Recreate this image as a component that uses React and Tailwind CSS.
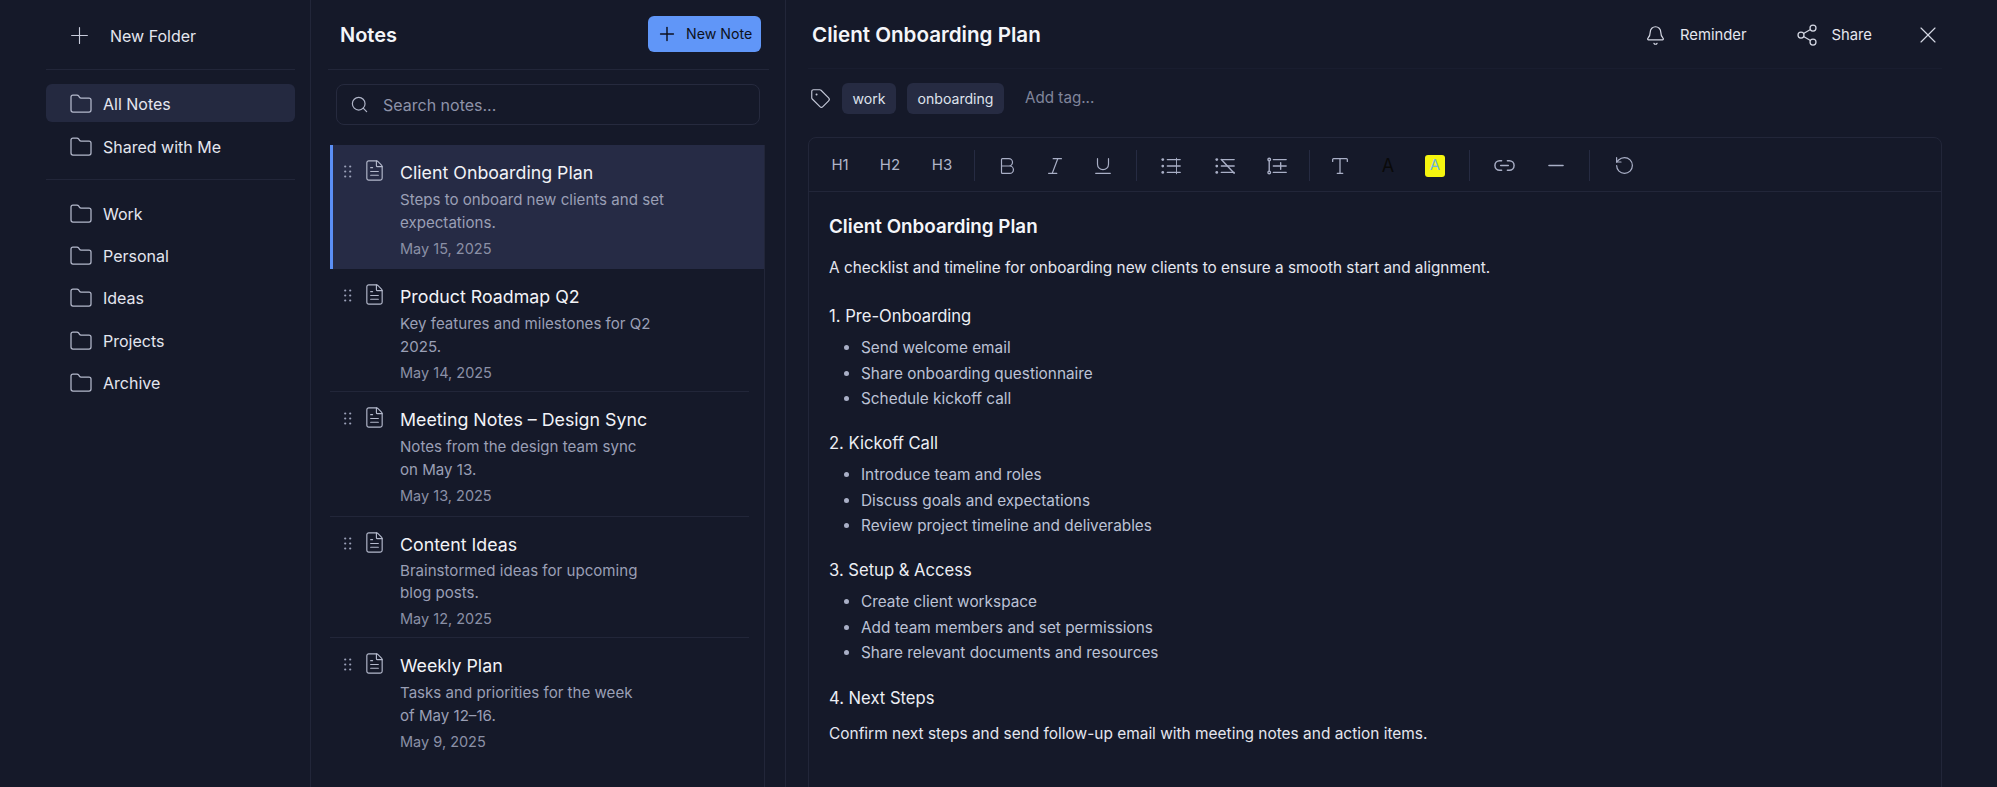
import React from "react";
import {
  Bell,
  Bold,
  FileText,
  Folder,
  Italic,
  Link2,
  Minus,
  Plus,
  RotateCcw,
  Search,
  Share2,
  Tag,
  Type,
  Underline,
  X,
} from "lucide-react";

const topFolders = ["All Notes", "Shared with Me"];
const folders = ["Work", "Personal", "Ideas", "Projects", "Archive"];

const notes = [
  { title: "Client Onboarding Plan", lines: ["Steps to onboard new clients and set", "expectations."], date: "May 15, 2025", active: true, h: "h-[124px]", lh: "leading-[23px]" },
  { title: "Product Roadmap Q2", lines: ["Key features and milestones for Q2", "2025."], date: "May 14, 2025", h: "h-[123px]", lh: "leading-[23px]" },
  { title: "Meeting Notes – Design Sync", lines: ["Notes from the design team sync", "on May 13."], date: "May 13, 2025", h: "h-[125px]", lh: "leading-[23px]" },
  { title: "Content Ideas", lines: ["Brainstormed ideas for upcoming", "blog posts."], date: "May 12, 2025", h: "h-[121px]", lh: "leading-[22px]" },
  { title: "Weekly Plan", lines: ["Tasks and priorities for the week", "of May 12–16."], date: "May 9, 2025", h: "h-[122px]", lh: "leading-[23px]" },
];

const sections = [
  { title: "1. Pre-Onboarding", items: ["Send welcome email", "Share onboarding questionnaire", "Schedule kickoff call"] },
  { title: "2. Kickoff Call", items: ["Introduce team and roles", "Discuss goals and expectations", "Review project timeline and deliverables"] },
  { title: "3. Setup & Access", items: ["Create client workspace", "Add team members and set permissions", "Share relevant documents and resources"] },
];

const Grip = () => (
  <svg width="8" height="13" viewBox="0 0 8 13" className="shrink-0 text-[#9aa0b8]" fill="currentColor">
    <circle cx="1.2" cy="1.5" r="1.1" />
    <circle cx="6.2" cy="1.5" r="1.1" />
    <circle cx="1.2" cy="6.5" r="1.1" />
    <circle cx="6.2" cy="6.5" r="1.1" />
    <circle cx="1.2" cy="11.5" r="1.1" />
    <circle cx="6.2" cy="11.5" r="1.1" />
  </svg>
);

// the three list buttons are not in lucide in this form
const ListIcon = ({ variant }) => (
  <svg width="22" height="22" viewBox="0 0 24 24" fill="none" stroke="currentColor" strokeWidth="1.5" strokeLinecap="round">
    {variant === "tree" ? (
      <>
        <circle cx="3.5" cy="5" r="1.4" />
        <path d="M3.5 6.5v11" />
        <circle cx="3.5" cy="19" r="1.4" />
      </>
    ) : (
      <>
        <circle cx="3" cy="5" r="1.5" fill="currentColor" stroke="none" />
        <circle cx="3" cy="12" r="1.5" fill="currentColor" stroke="none" />
        <circle cx="3" cy="19" r="1.5" fill="currentColor" stroke="none" />
      </>
    )}
    <path d="M8 5h14M8 12h14M8 19h14" />
    {variant === "plain" && <path d="M18 3.5v17" strokeWidth="1" />}
    {variant === "slash" && <path d="M8 5l14 15" />}
    {variant === "tree" && <path d="M16 8.5v7" />}
  </svg>
);

const FolderRow = ({ name, active }) => (
  <div className={`flex h-[38px] items-center rounded-md pl-[23px] pt-[2px] text-[16px] text-[#e4e6ef] ${active ? "bg-[#242940]" : ""}`}>
    <Folder size={24} strokeWidth={1.25} className="shrink-0 text-[#b4b9cc]" />
    <span className="ml-[10px]">{name}</span>
  </div>
);

const Divider = ({ className }) => <div className={`h-[31px] w-px bg-[#262b42] ${className}`} />;

const ToolBtn = ({ className = "", children }) => (
  <span className={`flex w-[24px] justify-center text-[#a9afc6] ${className}`}>{children}</span>
);

const App = () => {
  return (
    <div className="flex h-[787px] w-full overflow-hidden bg-[#151929] font-['Inter',sans-serif]">
      {/* folders */}
      <aside className="w-[311px] shrink-0 border-r border-[#222639] pl-[46px] pr-[15px]">
        <div className="flex h-[69px] items-center pl-[20px] pt-[2px] text-[16px] text-[#e4e6ef]">
          <Plus size={27} strokeWidth={1} className="text-[#c8ccdb]" />
          <span className="ml-[17px]">New Folder</span>
        </div>
        <div className="h-px bg-[#222639]" />
        <div className="mt-[14px] flex flex-col gap-[5px]">
          {topFolders.map((name, idx) => (
            <FolderRow key={name} name={name} active={idx === 0} />
          ))}
        </div>
        <div className="mt-[14px] h-px bg-[#222639]" />
        <div className="mt-[14px] flex flex-col gap-[4.2px]">
          {folders.map((name) => (
            <FolderRow key={name} name={name} />
          ))}
        </div>
      </aside>

      {/* note list */}
      <section className="w-[475px] shrink-0 border-r border-[#222639] pr-[20px]">
        <div className="ml-[17px] mr-[-4px] box-content flex h-[69px] items-center justify-between border-b border-[#222639] pl-[12px] pr-[8px]">
          <h2 className="pt-[1px] text-[20px] font-semibold text-[#f4f5f9]">Notes</h2>
          <button className="mt-[-2px] flex h-[36px] w-[113px] items-center rounded-md bg-[#6096f8] pl-[8px] text-[14.2px] text-[#0d1120]">
            <Plus size={22} strokeWidth={1.6} />
            <span className="ml-[8px]">New Note</span>
          </button>
        </div>
        <div className="ml-[25px] mr-[5px] mt-[14px] flex h-[41px] items-center rounded-lg border border-[#262a3e] pl-[13px] text-[16px] text-[#8d92a8]">
          <Search size={19} strokeWidth={1.5} className="text-[#b0b5c8]" />
          <span className="ml-[14px]">Search notes...</span>
        </div>
        <div className="ml-[19px] mt-[20px] h-[700px] border-r border-[#222639]">
          {notes.map((note, idx) => (
            <div
              key={note.title}
              className={`relative flex ${note.h} pt-[16px] ${note.active ? "border-l-[3px] border-[#5b8ff5] bg-[#262b45] pl-[11px]" : "pl-[14px]"}`}
            >
              <div className="mt-[4px]">
                <Grip />
              </div>
              <FileText size={23} strokeWidth={1.2} className="ml-[11px] mt-[-2px] shrink-0 text-[#b4b9cc]" />
              <div className="ml-[14px]">
                <h3 className="text-[17.8px] leading-[24px] text-[#f2f3f7]">{note.title}</h3>
                <p className={`mt-[3px] text-[15.1px] text-[#9a9fb5] ${note.lh}`}>
                  {note.lines[0]}
                  <br />
                  {note.lines[1]}
                </p>
                <p className="mt-[4px] text-[14.5px] leading-[22px] text-[#8b90a6]">{note.date}</p>
              </div>
              {idx > 0 && idx < notes.length - 1 && (
                <div className="absolute bottom-0 left-0 right-[15px] h-px bg-[#222639]" />
              )}
            </div>
          ))}
        </div>
      </section>

      {/* editor */}
      <main className="min-w-0 flex-1 pl-[22px] pr-[55px]">
        <div className="flex h-[69px] items-center justify-between border-b border-[#191d2f] pt-[2px]">
          <h1 className="ml-[4px] text-[20.6px] font-semibold text-[#f4f5f9]">Client Onboarding Plan</h1>
          <div className="flex items-center text-[14.8px] text-[#e4e6ef]">
            <Bell size={21} strokeWidth={1.4} className="text-[#d4d7e3]" />
            <span className="ml-[14px]">Reminder</span>
            <Share2 size={24} strokeWidth={1.25} className="ml-[49px] text-[#d4d7e3]" />
            <span className="ml-[12px]">Share</span>
            <X size={28} strokeWidth={1} className="ml-[42px] text-[#d4d7e3]" />
          </div>
        </div>
        <div className="mt-[14px] flex h-[31px] items-center">
          <Tag size={21} strokeWidth={1.3} className="ml-[2px] text-[#c4c8d8]" />
          <span className="ml-[11px] flex h-[31px] items-center rounded-md bg-[#262b42] px-[10.5px] text-[14.1px] text-[#dfe2ec]">work</span>
          <span className="ml-[11px] flex h-[31px] items-center rounded-md bg-[#262b42] px-[10.5px] text-[14.1px] text-[#dfe2ec]">onboarding</span>
          <span className="ml-[21px] text-[15.2px] text-[#80859b]">Add tag...</span>
        </div>
        <div className="mt-[23px] h-[700px] rounded-lg border border-[#222639]">
          <div className="flex h-[54px] items-center border-b border-[#222639] pl-[18px] pt-[2px] text-[15px] text-[#b0b5c9]">
            <span className="w-[26px] text-center">H1</span>
            <span className="ml-[24px] w-[26px] text-center">H2</span>
            <span className="ml-[26px] w-[26px] text-center">H3</span>
            <Divider className="ml-[19px]" />
            <ToolBtn className="ml-[20px]"><Bold size={22} strokeWidth={1.3} /></ToolBtn>
            <ToolBtn className="ml-[24px]"><Italic size={22} strokeWidth={1.3} /></ToolBtn>
            <ToolBtn className="ml-[24px]"><Underline size={22} strokeWidth={1.3} /></ToolBtn>
            <Divider className="ml-[21px]" />
            <ToolBtn className="ml-[22px]"><ListIcon variant="plain" /></ToolBtn>
            <ToolBtn className="ml-[30px]"><ListIcon variant="slash" /></ToolBtn>
            <ToolBtn className="ml-[28px]"><ListIcon variant="tree" /></ToolBtn>
            <Divider className="ml-[20px]" />
            <ToolBtn className="ml-[18px]"><Type size={22} strokeWidth={1.4} /></ToolBtn>
            <span className="ml-[26px] w-[20px] text-center text-[18px] text-[#0a0a0a]">A</span>
            <span className="ml-[27px] flex h-[22px] w-[20px] items-center justify-center rounded-[3px] bg-[#f5f50f] text-[15px] text-[#6fb3e0]">A</span>
            <Divider className="ml-[24px]" />
            <ToolBtn className="ml-[22px]"><Link2 size={23} strokeWidth={1.5} /></ToolBtn>
            <ToolBtn className="ml-[28px]"><Minus size={25} strokeWidth={1.6} /></ToolBtn>
            <Divider className="ml-[21px]" />
            <ToolBtn className="ml-[22px]"><RotateCcw size={21} strokeWidth={1.4} /></ToolBtn>
          </div>
          <div className="pl-[20px] pt-[23px] text-[#e4e6ef]">
            <h2 className="text-[18.8px] font-semibold leading-[24px] text-[#f4f5f9]">Client Onboarding Plan</h2>
            <p className="mt-[17px] text-[15.35px] leading-[24px]">
              A checklist and timeline for onboarding new clients to ensure a smooth start and alignment.
            </p>
            {sections.map((section, idx) => (
              <div key={section.title} className={idx === 0 ? "mt-[24px]" : "mt-[19.5px]"}>
                <h3 className="text-[16.6px] leading-[24px] text-[#eceef4]">{section.title}</h3>
                <ul className="mt-[7px] list-disc pl-[32px] text-[15.35px] leading-[25.5px] text-[#bcc2d6] marker:text-[#a9afc6]">
                  {section.items.map((item) => (
                    <li key={item}>{item}</li>
                  ))}
                </ul>
              </div>
            ))}
            <h3 className="mt-[20px] text-[16.6px] leading-[24px] text-[#eceef4]">4. Next Steps</h3>
            <p className="mt-[12px] text-[15.45px] leading-[24px]">
              Confirm next steps and send follow-up email with meeting notes and action items.
            </p>
          </div>
        </div>
      </main>
    </div>
  );
};

export default App;
